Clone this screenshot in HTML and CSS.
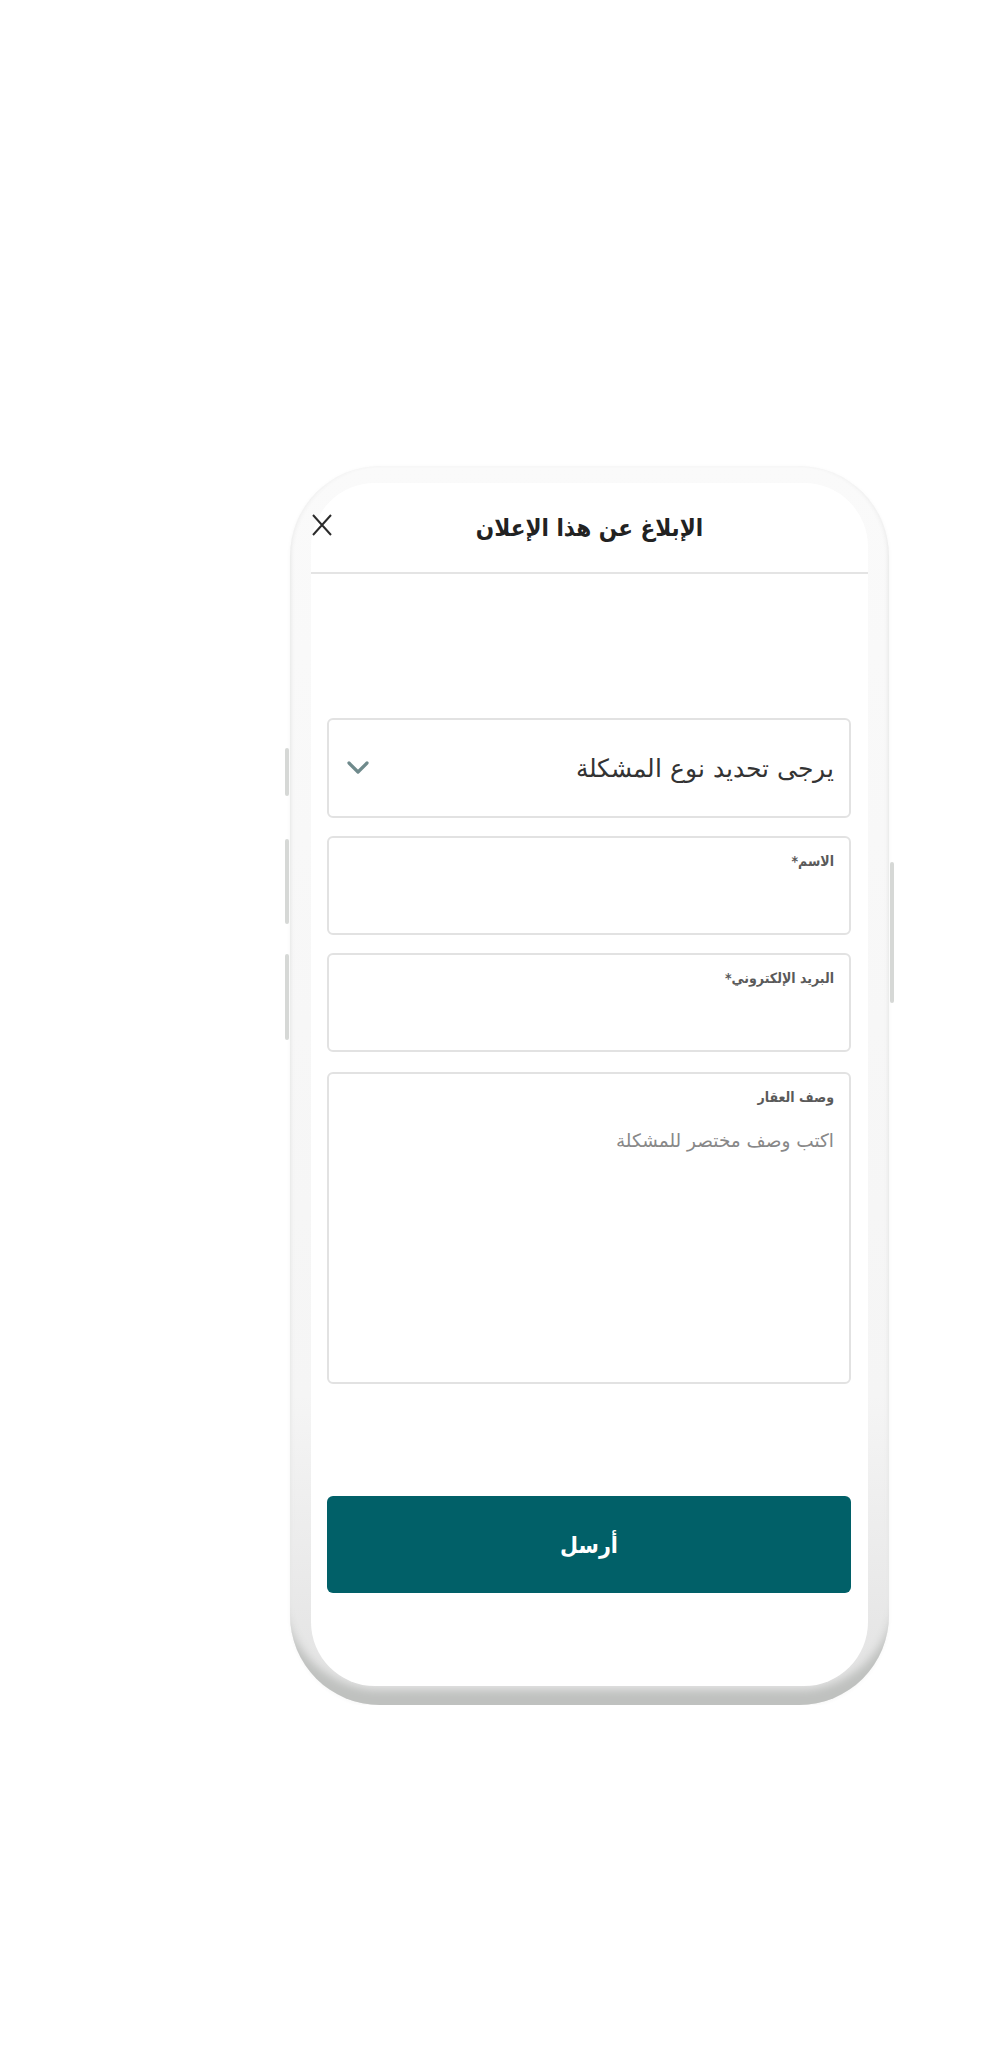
FILE: index.html
```html
<!DOCTYPE html>
<html lang="ar">
<head>
  <meta charset="UTF-8" />
  <meta name="viewport" content="width=device-width, initial-scale=1.0"/>
  <title>الإبلاغ عن هذا الإعلان</title>
  <link rel="stylesheet" href="styles.css">
</head>
<body>
  <div class="phone">
    <span class="side-btn btn-a"></span>
    <span class="side-btn btn-b"></span>
    <span class="side-btn btn-c"></span>
    <span class="side-btn btn-power"></span>

    <div class="screen" dir="rtl">
      <div class="header">
        <span></span>
        <h1>الإبلاغ عن هذا الإعلان</h1>
        <button class="close" aria-label="إغلاق">
          <svg width="22" height="24" viewBox="0 0 22 24">
            <path d="M2 2 L20 22 M20 2 L2 22" stroke="#2b2b2b" stroke-width="2" fill="none"/>
          </svg>
        </button>
      </div>

      <form class="form">
        <div class="field select-field">
          <span class="select-text">يرجى تحديد نوع المشكلة</span>
          <svg class="chevron" width="24" height="16" viewBox="0 0 24 16">
            <path d="M3 3 L12 12 L21 3" stroke="#6f8a8c" stroke-width="3.2" fill="none" stroke-linecap="round" stroke-linejoin="round"/>
          </svg>
        </div>

        <label class="field input-field">
          <span class="label">الاسم*</span>
        </label>

        <label class="field input-field">
          <span class="label">البريد الإلكتروني*</span>
        </label>

        <label class="field textarea-field">
          <span class="label">وصف العقار</span>
          <span class="placeholder">اكتب وصف مختصر للمشكلة</span>
        </label>

        <button type="button" class="submit">أرسل</button>
      </form>
    </div>
  </div>
</body>
</html>
```

FILE: styles.css
```css
body {
  margin: 0;
  background: #fff;
  font-family: 'DejaVu Sans', sans-serif;
}

.phone {
  position: relative;
  box-sizing: border-box;
  width: 599px;
  height: 1239px;
  margin: 466px 0 0 290px;
  padding: 17px 21px 19px;
  border-radius: 90px;
  background: linear-gradient(to bottom, #fafafa 0%, #f5f5f5 75%, #e2e2e2 100%);
  box-shadow: inset 0 -21px 8px -6px #bfc1bf, inset 3px 0 4px -2px #ebebeb, inset -3px 0 4px -2px #ebebeb, 0 1px 4px rgba(0,0,0,0.04);
}

.side-btn {
  position: absolute;
  width: 4px;
  background: #d6d8d6;
  border-radius: 2px;
}

.btn-a { left: -5px; top: 282px; height: 48px; }
.btn-b { left: -5px; top: 373px; height: 85px; }
.btn-c { left: -5px; top: 488px; height: 86px; }
.btn-power { right: -5px; top: 396px; height: 141px; }

.screen {
  height: 100%;
  background: #fff;
  border-radius: 64px;
  display: flex;
  flex-direction: column;
}

.header {
  display: grid;
  grid-template-columns: 1fr auto 1fr;
  align-items: center;
  height: 89px;
  border-bottom: 2px solid #e4e4e4;
}

.header h1 {
  margin: 0;
  font-family: 'DejaVu Sans Condensed', 'DejaVu Sans', sans-serif;
  font-size: 24px;
  font-weight: bold;
  color: #222;
}

.close {
  justify-self: end;
  padding: 0;
  border: none;
  background: none;
  line-height: 0;
  margin-top: -6px;
  cursor: pointer;
}

.form {
  display: flex;
  flex-direction: column;
  gap: 18px;
  padding: 144px 17px 0 16px;
}

.field {
  box-sizing: border-box;
  display: flex;
  flex-direction: column;
  height: 99px;
  border: 2px solid #e2e2e2;
  border-radius: 6px;
  background: #fff;
}

.select-field {
  flex-direction: row;
  align-items: center;
  justify-content: space-between;
  height: 100px;
  padding: 0 15px 0 17px;
}

.select-text {
  font-size: 25px;
  font-weight: 300;
  color: #333;
}

.input-field,
.textarea-field {
  padding: 13px 15px 0;
}

.textarea-field {
  height: 312px;
  margin-top: 2px;
}

.label {
  font-family: 'DejaVu Sans Condensed', 'DejaVu Sans', sans-serif;
  font-size: 14px;
  font-weight: bold;
  color: #5a5a5a;
  line-height: 20px;
}

.placeholder {
  margin-top: 20px;
  font-size: 18.5px;
  color: #888;
  line-height: 28px;
}

.submit {
  margin-top: 94px;
  height: 97px;
  border: none;
  border-radius: 6px;
  background: #016068;
  color: #fff;
  font-family: 'DejaVu Sans Condensed', 'DejaVu Sans', sans-serif;
  font-size: 23px;
  font-weight: bold;
  cursor: pointer;
}
```
